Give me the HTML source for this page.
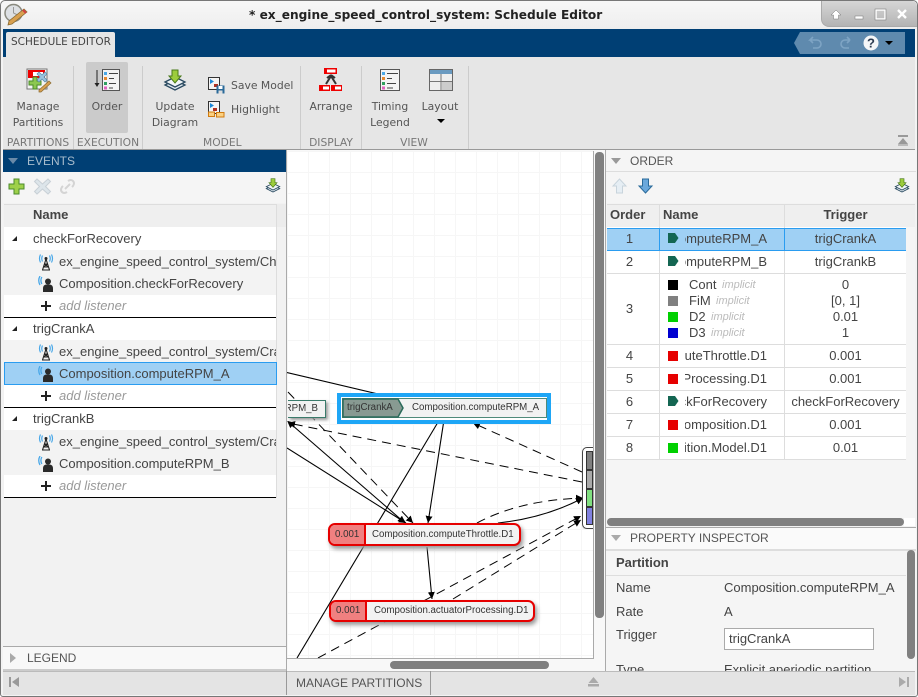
<!DOCTYPE html>
<html><head><meta charset="utf-8"><style>
html,body{margin:0;padding:0;width:918px;height:697px;overflow:hidden;background:#fff}
#w{position:relative;width:918px;height:697px;overflow:hidden;font-family:"Liberation Sans",sans-serif;font-size:13px;color:#444}
.a{position:absolute}
.t{position:absolute;white-space:nowrap;line-height:16px}
.d{font-family:"DejaVu Sans",sans-serif;font-size:10.8px;color:#555;margin-top:1px}
.c{text-align:center}
.s{font-family:"DejaVu Sans",sans-serif;font-size:10.7px;color:#777;text-align:center;margin-top:1px}
.sep{position:absolute;top:66px;height:83px;width:1px;background:#ccc}
.b{font-weight:bold}
.h{font-size:12px;color:#555}
.i{font-style:italic;color:#999}
.im{font-style:italic;color:#bbb;font-size:11px}
.clip{position:absolute;left:685px;width:83px;height:22px;overflow:hidden}
.clip span{position:absolute;right:1px;top:3px;white-space:nowrap;line-height:16px}
svg{position:absolute;overflow:visible}
.r{position:absolute;left:607px;width:299px;height:1px;background:#ddd}
.sq{position:absolute;left:668px;width:10px;height:10px}
.node{position:absolute;background:#f2f2f2;font-size:9.7px;color:#333;white-space:nowrap;box-sizing:border-box}
</style></head><body><div id="w">
<svg width="0" height="0" style="position:absolute"><defs>
<symbol id="layers" viewBox="0 0 24 24"><path d="M2 16l10-5 10 5-10 5z" fill="#dfe8ee" stroke="#2a4a60" stroke-width="1.300"/><path d="M2 13l10-5 10 5-10 5z" fill="#f2f6f8" stroke="#2a4a60" stroke-width="1.300"/><path d="M9 1h6v6h3l-6 7-6-7h3z" fill="#9ccc3c" stroke="#4a7a1a"/></symbol>
<symbol id="tower" viewBox="0 0 16 18"><path d="M8 5L4.500 16M8 5l3.500 11M6.500 10h3M5.800 13h4.400M4 16h8M6.500 10l3.700 3M9.500 10l-3.700 3" stroke="#222" stroke-width="1.100" fill="none"/><circle cx="8" cy="4.500" r="1.500" fill="#222"/><path d="M4.500 1.500Q3 4.500 4.500 7.500M11.500 1.500Q13 4.500 11.500 7.500M2.500 .5Q.5 4.500 2.500 8.500M13.500 .5Q15.500 4.500 13.500 8.500" stroke="#4aa8e8" fill="none" stroke-width="1.200"/></symbol>
<symbol id="person" viewBox="0 0 16 18"><circle cx="10" cy="5.500" r="3" fill="#2a2a2a"/><path d="M5 16v-3.500q0-3.500 3-4h4q3 .5 3 4V16z" fill="#2a2a2a"/><path d="M3.800 1Q2 4.500 3.800 8M2 0Q-.5 4.500 2 9" stroke="#4aa8e8" fill="none" stroke-width="1.300"/></symbol>
<symbol id="plus" viewBox="0 0 12 12"><path d="M5 1h2v4h4v2H7v4H5V7H1V5h4z" fill="#222"/></symbol>
<marker id="ah" markerUnits="userSpaceOnUse" markerWidth="8" markerHeight="8" refX="7" refY="3.500" orient="auto"><path d="M0 0L7 3.500 0 7z" fill="#000"/></marker>
<marker id="as" markerUnits="userSpaceOnUse" markerWidth="8" markerHeight="8" refX="1" refY="3.500" orient="auto"><path d="M7 0L0 3.500 7 7z" fill="#000"/></marker>
</defs></svg>

<!-- window -->
<div class="a" style="left:0;top:0;width:918px;height:697px;box-sizing:border-box;border:1px solid #777;border-radius:5px 5px 3px 3px;background:#f3f3f3"></div>
<div class="a" style="left:1px;top:1px;width:916px;height:28px;background:linear-gradient(#f7f7f7,#eeeeee);border-radius:5px 5px 0 0"></div>
<div class="t" style="left:249px;top:7px;font-family:'DejaVu Sans',sans-serif;font-weight:bold;font-size:12.15px;color:#222;width:354px">* ex_engine_speed_control_system: Schedule Editor</div>
<svg style="left:4px;top:3px" width="24" height="24" viewBox="0 0 24 24"><circle cx="9.500" cy="10" r="8.500" fill="#dde0e4" stroke="#8a8a80" stroke-width="1.500"/><path d="M9.500 4v6l4 2" stroke="#999" fill="none"/><path d="M20 6l3 3L8 21l-4 1 1-4z" fill="#d8a050" stroke="#8a6a30" stroke-width=".8"/><path d="M19 7l3 3" stroke="#d04040" stroke-width="2"/></svg>
<!-- window controls -->
<div class="a" style="left:821px;top:1px;width:96px;height:26px;background:linear-gradient(#d6d6d6,#b4b4b4);border-radius:0 5px 0 8px;border-left:1px solid #aaa;border-bottom:1px solid #aaa;box-sizing:border-box"></div>
<svg style="left:830px;top:8px" width="85" height="14" viewBox="0 0 85 14"><path d="M6 2l5 5H8.500v4h-5V7H1z" fill="#fff" stroke="#777" stroke-width=".5"/><rect x="25" y="8" width="8" height="3" fill="#fff" stroke="#777" stroke-width=".5"/><rect x="46" y="2" width="9" height="9" fill="none" stroke="#fff" stroke-width="1.500"/><rect x="45" y="1" width="11" height="11" fill="none" stroke="#777" stroke-width=".5"/><path d="M68 2l8 8M76 2l-8 8" stroke="#fff" stroke-width="2.400"/></svg>

<!-- blue band -->
<div class="a" style="left:3px;top:29px;width:912px;height:28px;background:#003f74"></div>
<div class="a" style="left:6px;top:32px;width:109px;height:25px;background:#e6e6e6;border-radius:2px 2px 0 0"></div>
<div class="t" style="left:11px;top:34px;font-family:'DejaVu Sans',sans-serif;font-size:10.5px;color:#444;line-height:16px">SCHEDULE EDITOR</div>
<svg style="left:794px;top:32px" width="112" height="22" viewBox="0 0 112 22"><path d="M0 11L6 0h105v22H6z" fill="#5f8aae"/><path d="M21 8h-5l3-3M16 8l3 3M18 8h5a4 4 0 010 8h-4" stroke="#7ea4c4" stroke-width="1.600" fill="none"/><path d="M56 8h-5a4 4 0 000 8h4M56 8l-3-3M56 8l-3 3" stroke="#7ea4c4" stroke-width="1.600" fill="none"/><circle cx="77" cy="11" r="7.500" fill="#f4f6f8"/><text x="77" y="15.500" text-anchor="middle" font-family="Liberation Sans" font-weight="bold" font-size="13" fill="#2a3a50">?</text><path d="M91 9h8l-4 4z" fill="#000"/></svg>

<!-- ribbon -->
<div class="a" style="left:3px;top:57px;width:912px;height:92px;background:#e6e6e6"></div>
<div class="a" style="left:3px;top:149px;width:912px;height:1px;background:#999"></div>
<div class="a" style="left:86px;top:62px;width:42px;height:71px;background:#cbcbcb;border-radius:2px"></div>
<div class="sep" style="left:73px"></div><div class="sep" style="left:142px"></div><div class="sep" style="left:300px"></div><div class="sep" style="left:361px"></div><div class="sep" style="left:468px"></div>

<svg style="left:26px;top:68px" width="25" height="25" viewBox="0 0 25 25"><rect x="1" y="1" width="20" height="20" fill="#f4f4f4" stroke="#777"/><rect x="3" y="3" width="15" height="6" fill="#fff" stroke="#e00" stroke-width="2"/><rect x="3" y="3" width="4" height="6" fill="#e00"/><path d="M7 9h4v4h4v4h-4v4H7v-4H3v-4h4z" fill="#8cc850" stroke="#4a8a2a"/><path d="M11 6l2-2 3 3 3-3 2 2-3 3 3 3-2 2-3-3-3 3-2-2 3-3z" fill="#9cc4de" stroke="#5a8aa8" stroke-width=".7"/><path d="M23 13l2 2-10 9h-2v-2z" fill="#d8a050" stroke="#8a6a30" stroke-width=".7"/></svg>
<div class="t d c" style="left:3px;top:98px;width:70px">Manage</div>
<div class="t d c" style="left:3px;top:114px;width:70px">Partitions</div>
<div class="t s" style="left:5px;top:134px;width:66px">PARTITIONS</div>

<svg style="left:94px;top:69px" width="26" height="23" viewBox="0 0 26 23"><path d="M3 1v15" stroke="#222"/><path d="M.5 14h5L3 18z" fill="#222"/><rect x="8.500" y=".5" width="17" height="21" fill="#f4f4f4" stroke="#555"/><rect x="10" y="3" width="3" height="3" fill="#4aa8e8"/><rect x="10" y="8" width="3" height="3" fill="#e88a30"/><rect x="10" y="13" width="3" height="3" fill="#30a060"/><rect x="10" y="17.500" width="3" height="3" fill="#e060c0"/><path d="M15 4.500h9M15 9.500h5M15 14.500h7M15 19h4" stroke="#444"/></svg>
<div class="t d c" style="left:86px;top:98px;width:42px">Order</div>
<div class="t s" style="left:75px;top:134px;width:66px">EXECUTION</div>

<svg style="left:163px;top:69px" width="24" height="24"><use href="#layers" width="24" height="24"/></svg>
<div class="t d c" style="left:145px;top:98px;width:60px">Update</div>
<div class="t d c" style="left:145px;top:114px;width:60px">Diagram</div>
<svg style="left:208px;top:77px" width="17" height="17" viewBox="0 0 17 17"><rect x=".5" y=".5" width="11" height="12" fill="#f4f4f4" stroke="#333"/><path d="M2 2l4 2.500L2 7z" fill="#1a88d8"/><rect x="6" y="7" width="4" height="3" fill="#b03020"/><rect x="8.500" y="8.500" width="8" height="8" fill="#2a6a9a"/><rect x="10.500" y="9" width="4" height="3" fill="#fff"/><rect x="10.500" y="13.500" width="4" height="3" fill="#ddd"/></svg>
<div class="t d" style="left:231px;top:77px">Save Model</div>
<svg style="left:208px;top:101px" width="17" height="17" viewBox="0 0 17 17"><rect x=".5" y=".5" width="11" height="12" fill="#f4f4f4" stroke="#333"/><path d="M2 2l4 2.500L2 7z" fill="#1a88d8"/><rect x="5" y="7" width="4" height="3" fill="#b03020"/><rect x=".5" y="11" width="6" height="4.500" fill="#fbd080" stroke="#d07a10"/><rect x="8.500" y="11.500" width="7.500" height="4.500" fill="#fbd080" stroke="#d07a10"/></svg>
<div class="t d" style="left:231px;top:101px">Highlight</div>
<div class="t s" style="left:203px;top:134px;width:38px">MODEL</div>

<svg style="left:318px;top:67px" width="26" height="25" viewBox="0 0 26 25"><rect x="6" y="1" width="13" height="6" fill="#e00"/><rect x="9" y="2.500" width="8.500" height="3" fill="#fff"/><rect x="1" y="18" width="11" height="6" fill="#e00"/><rect x="5" y="19.500" width="6" height="3" fill="#fff"/><rect x="13" y="18" width="11" height="6" fill="#e00"/><rect x="17" y="19.500" width="6" height="3" fill="#fff"/><path d="M13 9L8 17M13 9l5 8M13 8l-4 3M13 8l4 3" stroke="#333" stroke-width="2" fill="none"/></svg>
<div class="t d c" style="left:302px;top:98px;width:58px">Arrange</div>
<div class="t s" style="left:302px;top:134px;width:58px">DISPLAY</div>

<svg style="left:380px;top:69px" width="20" height="22" viewBox="0 0 20 22"><rect x=".5" y=".5" width="19" height="21" fill="#f4f4f4" stroke="#555"/><rect x="2" y="3" width="3" height="3" fill="#4aa8e8"/><rect x="2" y="8" width="3" height="3" fill="#e88a30"/><rect x="2" y="13" width="3" height="3" fill="#30a060"/><rect x="2" y="17.500" width="3" height="3" fill="#e060c0"/><path d="M7 4.500h11M7 9.500h5M7 14.500h9M7 19h6" stroke="#444"/></svg>
<div class="t d c" style="left:362px;top:98px;width:56px">Timing</div>
<div class="t d c" style="left:362px;top:114px;width:56px">Legend</div>
<svg style="left:429px;top:69px" width="24" height="22" viewBox="0 0 24 22"><rect x=".5" y=".5" width="23" height="21" fill="#eee" stroke="#666"/><rect x="1" y="1" width="22" height="4" fill="#6a9ac0"/><path d="M12 5v16M1 12.500h22" stroke="#777"/><rect x="13" y="13" width="10" height="8" fill="#ccc"/></svg>
<div class="t d c" style="left:415px;top:98px;width:50px">Layout</div>
<svg style="left:437px;top:119px" width="8" height="5"><path d="M0 0h8L4 4z" fill="#000"/></svg>
<div class="t s" style="left:396px;top:134px;width:36px">VIEW</div>
<svg style="left:897px;top:134px" width="12" height="13" viewBox="0 0 12 13"><rect x="1" y="1" width="10" height="2" fill="#999"/><path d="M6 4l5 6H1z" fill="#999"/><rect x="1" y="10" width="10" height="2" fill="#bbb"/></svg>

<!-- left panel -->
<div class="a" style="left:3px;top:150px;width:283px;height:519px;background:#f2f2f2"></div>
<div class="a" style="left:3px;top:150px;width:283px;height:22px;background:#003f74"></div>
<svg style="left:8px;top:158px" width="10" height="7"><path d="M0 0h10L5 6z" fill="#6a8aa8"/></svg>
<div class="t h" style="left:27px;top:153px;color:#a8bccc">EVENTS</div>
<div class="a" style="left:286px;top:150px;width:1px;height:522px;background:#aaa"></div>
<div class="a" style="left:3px;top:172px;width:283px;height:31px;background:#f5f5f5"></div>
<svg style="left:8px;top:178px" width="17" height="17" viewBox="0 0 17 17"><path d="M6 1h5v5h5v5h-5v5H6v-5H1V6h5z" fill="#9ed04a" stroke="#4a8a2a"/></svg>
<svg style="left:34px;top:178px" width="17" height="17" viewBox="0 0 17 17"><path d="M3 1l5.500 5L14 1l2.500 2.500-5 5 5 5L14 16l-5.500-5L3 16 .5 13.500l5-5-5-5z" fill="#dde5ea" stroke="#c8d0d6"/></svg>
<svg style="left:60px;top:179px" width="15" height="15" viewBox="0 0 15 15"><path d="M8 2q3-2 5 0t0 5l-1 1M7 13q-3 2-5 0t0-5l1-1M5 10l5-5" stroke="#d4d4d4" stroke-width="2" fill="none"/></svg>
<svg style="left:265px;top:178px" width="16" height="16"><use href="#layers" width="16" height="16"/></svg>

<div class="a" style="left:4px;top:204px;width:272px;height:23px;background:#efefef;border-top:1px solid #ddd;box-sizing:border-box"></div>
<div class="a" style="left:276px;top:204px;width:1px;height:23px;background:#ddd"></div>
<div class="a" style="left:277px;top:204px;width:9px;height:23px;background:#ececec"></div>
<div class="t b" style="left:33px;top:207px;color:#444">Name</div>
<div class="a" style="left:4px;top:227px;width:272px;height:271px;background:#fff"></div>
<div class="a" style="left:276px;top:227px;width:1px;height:271px;background:#ddd"></div>

<!-- groups -->
<div class="a" style="left:4px;top:250px;width:272px;height:45px;background:#f3f3f3"></div>
<div class="a" style="left:4px;top:340px;width:272px;height:22px;background:#f3f3f3"></div>
<div class="a" style="left:4px;top:430px;width:272px;height:45px;background:#f3f3f3"></div>
<div class="a" style="left:4px;top:362px;width:273px;height:23px;background:#9fd0f4;border:1px solid #2a9cf0;box-sizing:border-box"></div>
<div class="a" style="left:4px;top:317px;width:272px;height:1px;background:#000"></div>
<div class="a" style="left:4px;top:407px;width:272px;height:1px;background:#000"></div>
<div class="a" style="left:4px;top:497px;width:272px;height:1px;background:#000"></div>

<svg style="left:12px;top:236px" width="6" height="6"><path d="M5 0v5H0z" fill="#222"/></svg>
<svg style="left:12px;top:326px" width="6" height="6"><path d="M5 0v5H0z" fill="#222"/></svg>
<svg style="left:12px;top:416px" width="6" height="6"><path d="M5 0v5H0z" fill="#222"/></svg>
<div class="t" style="left:33px;top:231px">checkForRecovery</div>
<div class="t" style="left:33px;top:321px">trigCrankA</div>
<div class="t" style="left:33px;top:411px">trigCrankB</div>

<div class="a" style="left:59px;top:250px;width:217px;height:22px;overflow:hidden"><span class="t" style="left:0;top:4px">ex_engine_speed_control_system/Check</span></div>
<div class="a" style="left:59px;top:340px;width:217px;height:22px;overflow:hidden"><span class="t" style="left:0;top:4px">ex_engine_speed_control_system/Crank</span></div>
<div class="a" style="left:59px;top:430px;width:217px;height:22px;overflow:hidden"><span class="t" style="left:0;top:4px">ex_engine_speed_control_system/Crank</span></div>
<div class="t" style="left:59px;top:276px">Composition.checkForRecovery</div>
<div class="t" style="left:59px;top:366px">Composition.computeRPM_A</div>
<div class="t" style="left:59px;top:456px">Composition.computeRPM_B</div>
<div class="t i" style="left:59px;top:298px">add listener</div>
<div class="t i" style="left:59px;top:388px">add listener</div>
<div class="t i" style="left:59px;top:478px">add listener</div>
<svg style="left:38px;top:254px" width="16" height="18"><use href="#tower" width="16" height="18"/></svg>
<svg style="left:38px;top:344px" width="16" height="18"><use href="#tower" width="16" height="18"/></svg>
<svg style="left:38px;top:434px" width="16" height="18"><use href="#tower" width="16" height="18"/></svg>
<svg style="left:38px;top:276px" width="16" height="18"><use href="#person" width="16" height="18"/></svg>
<svg style="left:38px;top:366px" width="16" height="18"><use href="#person" width="16" height="18"/></svg>
<svg style="left:38px;top:456px" width="16" height="18"><use href="#person" width="16" height="18"/></svg>
<svg style="left:40px;top:300px" width="12" height="12"><use href="#plus" width="12" height="12"/></svg>
<svg style="left:40px;top:390px" width="12" height="12"><use href="#plus" width="12" height="12"/></svg>
<svg style="left:40px;top:480px" width="12" height="12"><use href="#plus" width="12" height="12"/></svg>

<!-- legend -->
<div class="a" style="left:3px;top:646px;width:283px;height:1px;background:#aaa"></div>
<div class="a" style="left:3px;top:647px;width:283px;height:22px;background:#f8f8f8"></div>
<svg style="left:10px;top:653px" width="7" height="10"><path d="M0 0l6 5-6 5z" fill="#aaa"/></svg>
<div class="t h" style="left:27px;top:650px">LEGEND</div>
<div class="a" style="left:3px;top:669px;width:283px;height:2px;background:#ccc"></div>

<!-- canvas -->
<div class="a" style="left:287px;top:150px;width:318px;height:521px;background:#f8f8f8"></div>
<div class="a" style="left:287px;top:151px;width:306px;height:507px;background-color:#fff;background-image:linear-gradient(#f6f6f6 1px,transparent 1px),linear-gradient(90deg,#f6f6f6 1px,transparent 1px);background-size:21px 21px;border-right:1px solid #aaa;border-bottom:1px solid #aaa;box-sizing:content-box;overflow:hidden"></div>
<svg style="left:287px;top:151px;clip-path:inset(0 0 0 0)" width="306" height="507" viewBox="287 151 306 507" fill="none" stroke="#000">
<g stroke-width="1.100">
<path d="M287 372.500L395 398"/>
<path d="M437.500 423L297 658"/>
<path d="M443.500 423L428 523" marker-end="url(#ah)"/>
<path d="M288 421.500L405 523" marker-end="url(#ah)" marker-start="url(#as)"/>
<path d="M287 448L406 523" marker-end="url(#ah)"/>
<path d="M427 547L432 599" marker-end="url(#ah)"/>
<path d="M498 523Q545 518 583 498" marker-end="url(#ah)"/>
</g>
<g stroke-width="1" stroke-dasharray="9 6">
<path d="M288 392L413 523" marker-end="url(#ah)"/>
<path d="M582 482L288 423" marker-end="url(#ah)"/>
<path d="M582 472L473 423" marker-end="url(#ah)"/>
<path d="M477 523Q520 500 583 498" marker-end="url(#ah)"/>
<path d="M318 658L581 516" marker-end="url(#ah)"/>
<path d="M453 599L581 520" marker-end="url(#ah)"/>
</g>
</svg>

<!-- B node -->
<div class="a" style="left:288px;top:400px;width:38px;height:18px;background:#f2f2f2;border:1px solid #3a7a6a;border-left:0;box-shadow:2px 2px 3px #999;box-sizing:border-box"></div>
<div class="node t" style="left:288px;top:401px;width:30px;background:none;text-align:right;overflow:hidden;direction:rtl">RPM_B</div>
<!-- A node -->
<div class="a" style="left:337px;top:393px;width:214px;height:31px;background:#fff;border:4px solid #1ea6f6;box-sizing:border-box"></div>
<div class="a" style="left:342px;top:398px;width:205px;height:20px;background:#f2f2f2;border:1px solid #4f8a7a;box-sizing:border-box"></div>
<svg style="left:342px;top:398px" width="62" height="20" viewBox="0 0 62 20"><path d="M1 1h55l5 9-5 9H1z" fill="#889a92" stroke="#2a6a5a" stroke-width="1.500"/></svg>
<div class="t" style="left:347px;top:400px;font-size:9.7px;color:#333">trigCrankA</div>
<div class="t" style="left:412px;top:400px;font-size:9.7px;color:#333">Composition.computeRPM_A</div>
<!-- Throttle -->
<div class="a" style="left:328px;top:523px;width:193px;height:23px;background:#f2f2f2;border:2px solid #e60000;border-radius:7px;box-sizing:border-box;box-shadow:2px 3px 4px #999;overflow:hidden"><div class="a" style="left:0;top:0;width:34px;height:19px;background:#f08080;border-right:2px solid #e60000"></div></div>
<div class="t" style="left:335px;top:527px;font-size:9.700px;color:#333">0.001</div>
<div class="t" style="left:372px;top:527px;font-size:9.700px;color:#333">Composition.computeThrottle.D1</div>
<!-- Actuator -->
<div class="a" style="left:329px;top:600px;width:206px;height:22px;background:#f2f2f2;border:2px solid #e60000;border-radius:7px;box-sizing:border-box;box-shadow:2px 3px 4px #999;overflow:hidden"><div class="a" style="left:0;top:0;width:34px;height:18px;background:#f08080;border-right:2px solid #e60000"></div></div>
<div class="t" style="left:336px;top:603px;font-size:9.700px;color:#333">0.001</div>
<div class="t" style="left:374px;top:603px;font-size:9.700px;color:#333">Composition.actuatorProcessing.D1</div>
<!-- group node -->
<div class="a" style="left:582px;top:447px;width:11px;height:82px;overflow:hidden"><div class="a" style="left:0;top:0;width:24px;height:82px;background:#fff;border:1px solid #444;border-radius:5px;box-sizing:border-box;box-shadow:1px 1px 2px #999"></div>
<div class="a" style="left:4px;top:4px;width:7px;height:19px;background:#808080;border:1px solid #333;box-sizing:border-box"></div>
<div class="a" style="left:4px;top:23px;width:7px;height:19px;background:#aaa;border:1px solid #333;box-sizing:border-box"></div>
<div class="a" style="left:4px;top:42px;width:7px;height:18px;background:#80e080;border:1px solid #333;box-sizing:border-box"></div>
<div class="a" style="left:4px;top:60px;width:7px;height:18px;background:#8080e0;border:1px solid #333;box-sizing:border-box"></div></div>
<!-- canvas scrollbars -->
<div class="a" style="left:595px;top:152px;width:9px;height:466px;background:#808080;border-radius:4px"></div>
<div class="a" style="left:390px;top:661px;width:159px;height:8px;background:#808080;border-radius:4px"></div>

<!-- right panel -->
<div class="a" style="left:605px;top:150px;width:1px;height:521px;background:#aaa"></div>
<div class="a" style="left:606px;top:150px;width:310px;height:22px;background:#f5f5f5;border-bottom:1px solid #ddd;box-sizing:border-box"></div>
<svg style="left:611px;top:158px" width="10" height="7"><path d="M0 0h10L5 6z" fill="#999"/></svg>
<div class="t h" style="left:630px;top:153px">ORDER</div>
<div class="a" style="left:606px;top:172px;width:310px;height:31px;background:#f5f5f5"></div>
<svg style="left:612px;top:178px" width="15" height="16" viewBox="0 0 15 16"><path d="M7.500 1l6.500 7h-3.500v7h-6V8H1z" fill="#e6eef4" stroke="#c8d4dc"/></svg>
<svg style="left:638px;top:178px" width="15" height="16" viewBox="0 0 15 16"><path d="M7.500 15L14 8h-3.500V1h-6v7H1z" fill="#6aa8dc" stroke="#2a6a9a"/></svg>
<svg style="left:894px;top:178px" width="16" height="16"><use href="#layers" width="16" height="16"/></svg>

<div class="a" style="left:607px;top:204px;width:308px;height:23px;background:#efefef;border-top:1px solid #ddd;box-sizing:border-box"></div>
<div class="a" style="left:607px;top:227px;width:299px;height:233px;background:#fff"></div>
<div class="a" style="left:607px;top:460px;width:308px;height:58px;background:#f5f5f5"></div>
<div class="a" style="left:906px;top:227px;width:9px;height:233px;background:#f5f5f5"></div>
<div class="a" style="left:607px;top:228px;width:299px;height:23px;background:#9fd0f4;border-top:1px solid #2a9cf0;border-bottom:1px solid #2a9cf0;box-sizing:border-box"></div>
<div class="a" style="left:659px;top:204px;width:1px;height:256px;background:#ddd"></div>
<div class="a" style="left:784px;top:204px;width:1px;height:256px;background:#ddd"></div>
<div class="a" style="left:659px;top:228px;width:1px;height:23px;background:#2a9cf0"></div>
<div class="a" style="left:784px;top:228px;width:1px;height:23px;background:#2a9cf0"></div>
<div class="r" style="top:273px"></div><div class="r" style="top:344px"></div><div class="r" style="top:367px"></div><div class="r" style="top:390px"></div><div class="r" style="top:413px"></div><div class="r" style="top:436px"></div><div class="r" style="top:459px"></div>
<div class="t b" style="left:610px;top:207px">Order</div>
<div class="t b" style="left:663px;top:207px">Name</div>
<div class="t b c" style="left:785px;top:207px;width:121px">Trigger</div>

<div class="t c" style="left:607px;top:231px;width:45px">1</div>
<div class="t c" style="left:607px;top:254px;width:45px">2</div>
<div class="t c" style="left:607px;top:301px;width:45px">3</div>
<div class="t c" style="left:607px;top:348px;width:45px">4</div>
<div class="t c" style="left:607px;top:371px;width:45px">5</div>
<div class="t c" style="left:607px;top:394px;width:45px">6</div>
<div class="t c" style="left:607px;top:417px;width:45px">7</div>
<div class="t c" style="left:607px;top:440px;width:45px">8</div>

<svg style="left:668px;top:233px" width="11" height="11"><path d="M0 0h7l3.500 5-3.500 5H0z" fill="#146652"/></svg>
<svg style="left:668px;top:256px" width="11" height="11"><path d="M0 0h7l3.500 5-3.500 5H0z" fill="#146652"/></svg>
<svg style="left:668px;top:396px" width="11" height="11"><path d="M0 0h7l3.500 5-3.500 5H0z" fill="#146652"/></svg>
<div class="sq" style="top:280px;background:#000"></div>
<div class="sq" style="top:296px;background:#808080"></div>
<div class="sq" style="top:312px;background:#00d000"></div>
<div class="sq" style="top:328px;background:#0000d0"></div>
<div class="sq" style="top:351px;background:#e60000"></div>
<div class="sq" style="top:374px;background:#e60000"></div>
<div class="sq" style="top:420px;background:#e60000"></div>
<div class="sq" style="top:443px;background:#00d000"></div>

<div class="clip" style="top:228px"><span>Composition.computeRPM_A</span></div>
<div class="clip" style="top:251px"><span>Composition.computeRPM_B</span></div>
<div class="clip" style="top:345px"><span>Composition.computeThrottle.D1</span></div>
<div class="clip" style="top:368px"><span>Composition.actuatorProcessing.D1</span></div>
<div class="clip" style="top:391px"><span>Composition.checkForRecovery</span></div>
<div class="clip" style="top:414px"><span>Composition.D1</span></div>
<div class="clip" style="top:437px"><span>Composition.Model.D1</span></div>

<div class="t" style="left:689px;top:277px">Cont</div><div class="t im" style="left:722px;top:277px">implicit</div>
<div class="t" style="left:689px;top:293px">FiM</div><div class="t im" style="left:716px;top:293px">implicit</div>
<div class="t" style="left:689px;top:309px">D2</div><div class="t im" style="left:711px;top:309px">implicit</div>
<div class="t" style="left:689px;top:325px">D3</div><div class="t im" style="left:711px;top:325px">implicit</div>

<div class="t c" style="left:785px;top:231px;width:121px">trigCrankA</div>
<div class="t c" style="left:785px;top:254px;width:121px">trigCrankB</div>
<div class="t c" style="left:785px;top:277px;width:121px">0</div>
<div class="t c" style="left:785px;top:293px;width:121px">[0, 1]</div>
<div class="t c" style="left:785px;top:309px;width:121px">0.01</div>
<div class="t c" style="left:785px;top:325px;width:121px">1</div>
<div class="t c" style="left:785px;top:348px;width:121px">0.001</div>
<div class="t c" style="left:785px;top:371px;width:121px">0.001</div>
<div class="t c" style="left:785px;top:394px;width:121px">checkForRecovery</div>
<div class="t c" style="left:785px;top:417px;width:121px">0.001</div>
<div class="t c" style="left:785px;top:440px;width:121px">0.01</div>

<div class="a" style="left:607px;top:518px;width:297px;height:8px;background:#808080;border-radius:4px"></div>
<div class="a" style="left:904px;top:518px;width:11px;height:8px;background:#fff"></div>
<div class="a" style="left:606px;top:527px;width:310px;height:1px;background:#aaa"></div>

<!-- property inspector -->
<div class="a" style="left:606px;top:528px;width:310px;height:21px;background:#fafafa"></div>
<svg style="left:611px;top:535px" width="10" height="7"><path d="M0 0h10L5 6z" fill="#aaa"/></svg>
<div class="t h" style="left:630px;top:530px">PROPERTY INSPECTOR</div>
<div class="a" style="left:606px;top:549px;width:310px;height:122px;background:#f5f5f5;border-top:2px solid #ddd;box-sizing:border-box"></div>
<div class="a" style="left:606px;top:575px;width:300px;height:1px;background:#ddd"></div>
<div class="t b" style="left:616px;top:555px;color:#444">Partition</div>
<div class="t" style="left:616px;top:580px">Name</div>
<div class="t" style="left:724px;top:580px">Composition.computeRPM_A</div>
<div class="t" style="left:616px;top:604px">Rate</div>
<div class="t" style="left:724px;top:604px">A</div>
<div class="t" style="left:616px;top:627px">Trigger</div>
<div class="a" style="left:724px;top:628px;width:150px;height:22px;background:#fff;border:1px solid #aaa;box-sizing:border-box"></div>
<div class="t" style="left:729px;top:631px">trigCrankA</div>
<div class="a" style="left:606px;top:660px;width:300px;height:11px;overflow:hidden"><span class="t" style="left:10px;top:2px">Type</span><span class="t" style="left:118px;top:2px">Explicit aperiodic partition</span></div>
<div class="a" style="left:907px;top:550px;width:8px;height:109px;background:#808080;border-radius:4px"></div>

<!-- bottom bar -->
<div class="a" style="left:3px;top:671px;width:912px;height:24px;background:#e4e4e4;border-top:1px solid #bbb;box-sizing:border-box"></div>
<div class="a" style="left:286px;top:671px;width:1px;height:24px;background:#999"></div>
<div class="a" style="left:430px;top:671px;width:1px;height:24px;background:#999"></div>
<div class="t h" style="left:296px;top:675px">MANAGE PARTITIONS</div>
<svg style="left:9px;top:677px" width="11" height="11"><rect x="0" y="0" width="2" height="10" fill="#999"/><path d="M10 0v10L3 5z" fill="#999"/></svg>
<svg style="left:588px;top:677px" width="11" height="11"><path d="M5.500 0l5 6H.5z" fill="#aaa"/><rect x="0" y="7" width="11" height="2.500" fill="#aaa"/></svg>
<svg style="left:899px;top:677px" width="11" height="11"><path d="M0 0v10l7-5z" fill="#aaa"/><rect x="8" y="0" width="2" height="10" fill="#aaa"/></svg>
</div></body></html>
